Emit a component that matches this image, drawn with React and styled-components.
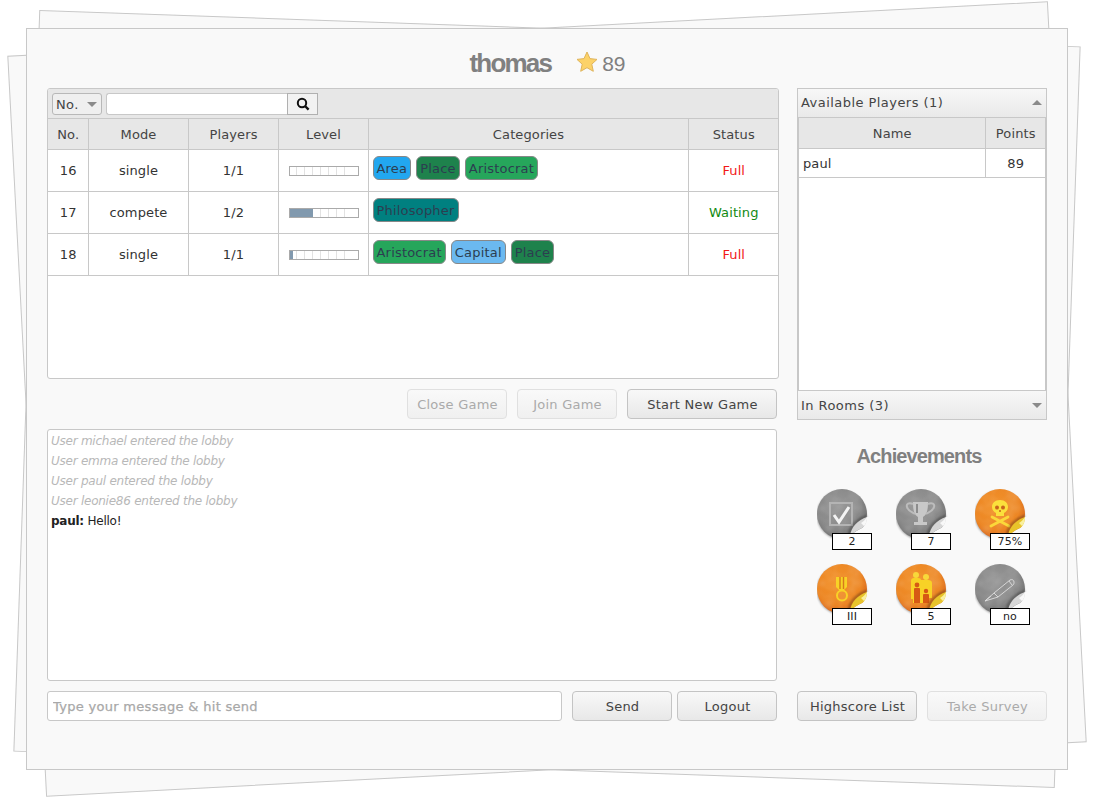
import React from "react";
import styled, { createGlobalStyle } from "styled-components";

const games = [
    { no: 16, mode: "single", players: "1/1", level: 0, tags: ["Area", "Place", "Aristocrat"], status: "Full" },
    { no: 17, mode: "compete", players: "1/2", level: 23, tags: ["Philosopher"], status: "Waiting" },
    { no: 18, mode: "single", players: "1/1", level: 3, tags: ["Aristocrat", "Capital", "Place"], status: "Full" },
];

const tagColors = {
    Area: "#22a7f0",
    Place: "#1e824c",
    Aristocrat: "#26a65b",
    Philosopher: "#008080",
    Capital: "#6bb9f0",
};

const lobby = ["michael", "emma", "paul", "leonie86"];

const achievements = [
    { id: "check", tone: "grey", label: "2" },
    { id: "trophy", tone: "grey", label: "7" },
    { id: "skull", tone: "orange", label: "75%" },
    { id: "medal", tone: "orange", label: "III" },
    { id: "family", tone: "orange", label: "5" },
    { id: "pen", tone: "grey", label: "no" },
];

const Glyph = ({ id }) => {
    if (id === "check") {
        return (
            <g fill="none">
                <rect x="13" y="14" width="22" height="22" stroke="#b4b4b4" strokeWidth="2" />
                <path d="M17 26l5 7 10-15" stroke="#f4f4f4" strokeWidth="3" />
            </g>
        );
    }
    if (id === "trophy") {
        return (
            <g>
                <path d="M17 13h15c0 8-1 13-5 15v5h4v3H18v-3h4v-5c-4-2-5-7-5-15z" fill="#c8c8c8" />
                <path
                    d="M17 15c-4-2-7 0-6 3 1 4 5 5 8 7M32 15c4-2 7 0 6 3-1 4-5 5-8 7"
                    fill="none"
                    stroke="#bcbcbc"
                    strokeWidth="2"
                />
                <path d="M21 15v9" stroke="#8c8c8c" strokeWidth="2" />
            </g>
        );
    }
    if (id === "skull") {
        return (
            <g>
                <path d="M25 11c-5 0-8 3-8 7 0 3 2 5 4 6v3h8v-3c2-1 4-3 4-6 0-4-3-7-8-7z" fill="#fbe03c" />
                <circle cx="22" cy="18.5" r="2" fill="#c9641c" />
                <circle cx="28" cy="18.5" r="2" fill="#c9641c" />
                <path d="M24 22h2" stroke="#c9641c" strokeWidth="1.4" />
                <path d="M17 28l17 9M33 28l-17 9" stroke="#fbd83a" strokeWidth="2.8" strokeLinecap="round" />
            </g>
        );
    }
    if (id === "medal") {
        return (
            <g>
                <path d="M19 13h11v10l-4 4h-3l-4-4z" fill="#f8d226" />
                <path d="M23 13v12M26.5 13v12" stroke="#d8781c" strokeWidth="1.4" />
                <circle cx="25" cy="31.5" r="5" fill="none" stroke="#f8d226" strokeWidth="2" />
            </g>
        );
    }
    if (id === "family") {
        return (
            <g>
                <circle cx="20" cy="11" r="3" fill="#f8d83a" />
                <circle cx="30" cy="13" r="3" fill="#f8d83a" />
                <path d="M15 17q0-3 3-3h4q3 0 3 2 1 0 7 0 4 0 4 3v15h-3v5H17v-4h-2z" fill="#f8d226" />
                <circle cx="21" cy="21" r="2.4" fill="#d65a14" />
                <path d="M18 25q0-1 1-1h4q1 0 1 1v14h-6z" fill="#d65a14" />
                <circle cx="30" cy="27" r="2.2" fill="#d65a14" />
                <path d="M27 31q0-1 1-1h4q1 0 1 1v8h-6z" fill="#d65a14" />
            </g>
        );
    }
    return (
        <g fill="none" stroke="#dedede" strokeWidth="0.9">
            <path d="M19 29L35 16c2-1 4 0 4 2 0 1 0 2-1 3L23 33z" />
            <path d="M19 29l-9 8 13-4M10 37l6-5M34 17l3 4" />
        </g>
    );
};

const Badge = ({ id, tone }) => {
    const orange = tone === "orange";
    return (
        <svg width="52" height="52" viewBox="0 0 52 52">
            <defs>
                <radialGradient id={`face-${id}`} cx="42%" cy="35%" r="72%">
                    <stop offset="0" stopColor={orange ? "#f2922a" : "#989898"} />
                    <stop offset="0.65" stopColor={orange ? "#ec8624" : "#878787"} />
                    <stop offset="1" stopColor={orange ? "#cf5a1c" : "#626262"} />
                </radialGradient>
                <filter id={`mottle-${id}`} x="0" y="0" width="100%" height="100%">
                    <feTurbulence type="fractalNoise" baseFrequency="0.09" numOctaves="2" seed="4" />
                    <feColorMatrix values="0 0 0 0 1 0 0 0 0 1 0 0 0 0 1 0.22 0 0 0 -0.07" />
                    <feComposite in2="SourceGraphic" operator="in" />
                </filter>
                <filter id={`soft-${id}`} x="-20%" y="-20%" width="140%" height="140%">
                    <feGaussianBlur stdDeviation="1" />
                </filter>
            </defs>
            <circle cx="24.5" cy="26" r="24.5" fill="#000" opacity="0.4" filter={`url(#soft-${id})`} />
            <circle cx="25" cy="25" r="25" fill={`url(#face-${id})`} />
            <circle cx="25" cy="25" r="25" fill="#fff" filter={`url(#mottle-${id})`} />
            <Glyph id={id} />
            <path
                d="M32 46C33 37 41 30 50 27"
                fill="none"
                stroke="#000"
                strokeWidth="2.5"
                opacity="0.3"
                filter={`url(#soft-${id})`}
            />
            <path d="M33 52V47C37 43 41 41 45 39 48 37 50 33 50 28H52V52z" fill="#f9f9f9" />
            <path
                d="M33 47C34 38 41 31 50 28 50 33 48 37 45 39 41 41 37 43 33 47z"
                fill={orange ? "#e8c42a" : "#d6d6d6"}
            />
            <path d="M44 34c2-1 4-3 6-6 0 4-1 7-3 9-1-1-2-2-3-3z" fill={orange ? "#f9f0a0" : "#f8f8f8"} />
        </svg>
    );
};

const Arrow = ({ up }) => <Caret $up={up} />;

const App = () => (
    <Page>
        <GlobalStyle />
        <Stage>
            <Sheet $angle={2} />
            <Sheet $angle={-3} />
            <Panel>
                <Header>
                    <Title>thomas</Title>
                    <Score>
                        <svg width="22" height="22" viewBox="0 0 22 22">
                            <path
                                d="M11 1l3 6.6 7 .8-5.2 4.8 1.5 7.1L11 16.7l-6.3 3.6 1.5-7.1L1 8.4l7-.8z"
                                fill="#fcd268"
                                stroke="#dfb45c"
                            />
                        </svg>
                        <ScoreValue>89</ScoreValue>
                    </Score>
                </Header>
                <Columns>
                    <LeftColumn>
                        <GameGrid>
                            <Toolbar>
                                <FilterSelect>
                                    No.
                                    <Arrow />
                                </FilterSelect>
                                <SearchBox />
                                <SearchButton>
                                    <svg width="14" height="14" viewBox="0 0 14 14" fill="none">
                                        <circle cx="6" cy="6" r="4.2" stroke="#111" strokeWidth="2" />
                                        <path d="M9 9l3.6 3.6" stroke="#111" strokeWidth="2.4" />
                                    </svg>
                                </SearchButton>
                            </Toolbar>
                            <GamesTable>
                                <colgroup>
                                    <col width="40" />
                                    <col width="100" />
                                    <col width="90" />
                                    <col width="90" />
                                    <col width="320" />
                                    <col width="90" />
                                </colgroup>
                                <thead>
                                    <tr>
                                        <th>No.</th>
                                        <th>Mode</th>
                                        <th>Players</th>
                                        <th>Level</th>
                                        <th>Categories</th>
                                        <th>Status</th>
                                    </tr>
                                </thead>
                                <tbody>
                                    {games.map(game => (
                                        <tr key={game.no}>
                                            <td>{game.no}</td>
                                            <td>{game.mode}</td>
                                            <td>{game.players}</td>
                                            <td>
                                                <LevelBar>
                                                    <LevelFill style={{ width: game.level }} />
                                                </LevelBar>
                                            </td>
                                            <TagCell>
                                                <TagList>
                                                    {game.tags.map(tag => (
                                                        <Tag key={tag} $color={tagColors[tag]}>
                                                            {tag}
                                                        </Tag>
                                                    ))}
                                                </TagList>
                                            </TagCell>
                                            <StatusCell $status={game.status}>{game.status}</StatusCell>
                                        </tr>
                                    ))}
                                </tbody>
                            </GamesTable>
                        </GameGrid>
                        <GameActions>
                            <Button $width={100} disabled>
                                Close Game
                            </Button>
                            <Button $width={100} disabled>
                                Join Game
                            </Button>
                            <Button $width={150}>Start New Game</Button>
                        </GameActions>
                        <ChatLog>
                            {lobby.map(name => (
                                <Notice key={name}>User {name} entered the lobby</Notice>
                            ))}
                            <Message>
                                <b>paul:</b> Hello!
                            </Message>
                        </ChatLog>
                        <ChatBar>
                            <ChatInput placeholder="Type your message & hit send" />
                            <Button $width={100}>Send</Button>
                            <LogoutButton $width={100}>Logout</LogoutButton>
                        </ChatBar>
                    </LeftColumn>
                    <RightColumn>
                        <AccordionHead $lift={2}>
                            Available Players (1)
                            <Arrow up />
                        </AccordionHead>
                        <PlayerPane>
                            <PlayersTable>
                                <colgroup>
                                    <col width="186" />
                                    <col width="60" />
                                </colgroup>
                                <thead>
                                    <tr>
                                        <th>Name</th>
                                        <th>Points</th>
                                    </tr>
                                </thead>
                                <tbody>
                                    <tr>
                                        <PlayerName>paul</PlayerName>
                                        <td>89</td>
                                    </tr>
                                </tbody>
                            </PlayersTable>
                        </PlayerPane>
                        <AccordionHead $lift={0}>
                            In Rooms (3)
                            <Arrow />
                        </AccordionHead>
                        <SectionTitle>Achievements</SectionTitle>
                        <AchievementGrid>
                            {achievements.map(item => (
                                <Achievement key={item.id}>
                                    <Badge id={item.id} tone={item.tone} />
                                    <AchievementLabel>{item.label}</AchievementLabel>
                                </Achievement>
                            ))}
                        </AchievementGrid>
                        <RightActions>
                            <Button $width={120}>Highscore List</Button>
                            <Button $width={120} disabled>
                                Take Survey
                            </Button>
                        </RightActions>
                    </RightColumn>
                </Columns>
            </Panel>
        </Stage>
    </Page>
);

const GlobalStyle = createGlobalStyle`
    html, body {
        margin: 0;
        background: #fff;
    }

    body {
        font-family: "DejaVu Sans", Verdana, sans-serif;
        font-size: 13px;
        letter-spacing: 0.12px;
        color: #333;
    }
`;

const Page = styled.div`
    box-sizing: border-box;
    height: 806px;
    padding: 28px 0 0 26px;
    overflow: hidden;
`;

const Stage = styled.div`
    position: relative;
    width: 1042px;
    height: 742px;
`;

const Sheet = styled.div`
    position: absolute;
    inset: 0;
    box-sizing: border-box;
    background: #f9f9f9;
    border: 1px solid #c8c8c8;
    transform: rotate(${p => p.$angle}deg);
`;

const Panel = styled.main`
    position: relative;
    box-sizing: border-box;
    width: 100%;
    height: 100%;
    padding: 0 19px 0 20px;
    background: #f9f9f9;
    border: 1px solid #c8c8c8;
    display: flex;
    flex-direction: column;
`;

const Header = styled.header`
    height: 59px;
    display: flex;
    align-items: center;
    justify-content: center;
    gap: 25px;
    padding-top: 10px;
    box-sizing: border-box;
    color: #808080;
    font-family: "Liberation Sans", Arial, sans-serif;
`;

const Title = styled.h1`
    margin: 0;
    font-size: 26px;
    font-weight: bold;
    letter-spacing: -1.8px;
`;

const Score = styled.div`
    display: flex;
    align-items: center;
    gap: 4px;

    svg {
        margin-top: -4px;
    }
`;

const ScoreValue = styled.span`
    font-size: 21px;
    letter-spacing: 0;
    padding-top: 1px;
`;

const Columns = styled.div`
    display: flex;
    gap: 18px;
`;

const LeftColumn = styled.section`
    width: 732px;
    display: flex;
    flex-direction: column;
    gap: 10px;
`;

const RightColumn = styled.aside`
    width: 250px;
    height: 633px;
    display: flex;
    flex-direction: column;
`;

const GameGrid = styled.div`
    box-sizing: border-box;
    height: 291px;
    background: #fff;
    border: 1px solid #c8c8c8;
    border-radius: 3px;
    overflow: hidden;
`;

const Toolbar = styled.div`
    box-sizing: border-box;
    height: 30px;
    padding: 4px;
    display: flex;
    background: #e7e7e7;
    border-bottom: 1px solid #c8c8c8;
`;

const FilterSelect = styled.div`
    box-sizing: border-box;
    width: 50px;
    height: 22px;
    margin-right: 4px;
    padding: 0 4px 0 3px;
    display: flex;
    align-items: center;
    justify-content: space-between;
    letter-spacing: 0.4px;
    color: #444;
    background: #efefef;
    border: 1px solid #b8b8b8;
    border-radius: 3px;
`;

const SearchBox = styled.input`
    box-sizing: border-box;
    width: 181px;
    height: 22px;
    padding: 0 4px;
    background: #fff;
    border: 1px solid #c8c8c8;
    border-right: 0;
    border-radius: 3px 0 0 3px;
    outline: none;
`;

const SearchButton = styled.button`
    box-sizing: border-box;
    width: 31px;
    height: 22px;
    padding: 0;
    display: flex;
    align-items: center;
    justify-content: center;
    background: #f2f2f2;
    border: 1px solid #b0b0b0;
`;

const Caret = styled.i`
    width: 0;
    height: 0;
    border-left: 5px solid transparent;
    border-right: 5px solid transparent;
    ${p => (p.$up ? "border-bottom: 5px solid #8a8a8a;" : "border-top: 5px solid #8a8a8a;")}
`;

const GamesTable = styled.table`
    width: 730px;
    table-layout: fixed;
    border-collapse: collapse;

    th {
        height: 30px;
        padding: 0 0 0 1px;
        font-weight: normal;
        color: #444;
        background: #e7e7e7;
        border-right: 1px solid #c8c8c8;
        border-bottom: 1px solid #c8c8c8;
    }

    td {
        height: 41px;
        padding: 0 0 0 1px;
        text-align: center;
        border-right: 1px solid #c8c8c8;
        border-bottom: 1px solid #c8c8c8;
    }

    th:last-child,
    td:last-child {
        border-right: 0;
    }
`;

const LevelBar = styled.div`
    box-sizing: border-box;
    width: 70px;
    height: 10px;
    margin: 0 auto 0 9px;
    border: 1px solid #aaa;
    background: repeating-linear-gradient(to right, #fff 0 6px, #e2e2e2 6px 7px, #fff 7px 8px) no-repeat;
    background-size: 56px 100%;
`;

const LevelFill = styled.div`
    height: 100%;
    background: #8199ae;
`;

const TagCell = styled.td`
    vertical-align: top;
`;

const TagList = styled.div`
    display: flex;
    gap: 5px;
    padding: 6px 0 0 3px;
`;

const Tag = styled.span`
    box-sizing: border-box;
    height: 24px;
    padding: 0 3px;
    line-height: 24px;
    letter-spacing: 0.2px;
    color: #2c3e50;
    background: ${p => p.$color};
    border: 1px solid #888;
    border-radius: 6px;
`;

const StatusCell = styled.td`
    color: ${p => (p.$status === "Full" ? "#f21818" : "#128a12")};
`;

const GameActions = styled.div`
    display: flex;
    justify-content: flex-end;
    gap: 10px;
    padding-right: 2px;
`;

const Button = styled.button`
    box-sizing: border-box;
    width: ${p => p.$width}px;
    height: 30px;
    padding: 0 0 0 1px;
    font: inherit;
    letter-spacing: 0.25px;
    color: #444;
    background: linear-gradient(#f8f8f8, #e8e8e8);
    border: 1px solid #c4c4c4;
    border-radius: 4px;

    &:disabled {
        color: #aaa;
        background: linear-gradient(#f9f9f9, #f0f0f0);
        border-color: #e0e0e0;
    }
`;

const LogoutButton = styled(Button)`
    margin-left: -5px;
`;

const ChatLog = styled.div`
    box-sizing: border-box;
    width: 730px;
    height: 252px;
    padding: 1px 3px;
    background: #fff;
    border: 1px solid #c8c8c8;
    border-radius: 3px;
    font-size: 12px;
    letter-spacing: -0.25px;
    line-height: 20px;
`;

const Notice = styled.div`
    font-style: italic;
    color: #b8b8b8;
`;

const Message = styled.div`
    color: #222;
`;

const ChatBar = styled.div`
    width: 730px;
    display: flex;
    gap: 10px;
`;

const ChatInput = styled.input`
    box-sizing: border-box;
    width: 515px;
    height: 30px;
    padding: 0 5px;
    font: inherit;
    background: #fff;
    border: 1px solid #c8c8c8;
    border-radius: 3px;
    outline: none;

    &::placeholder {
        color: #a8a8a8;
        opacity: 1;
        letter-spacing: 0.3px;
        -webkit-text-stroke: 0.25px #a8a8a8;
    }
`;

const AccordionHead = styled.div`
    box-sizing: border-box;
    height: 30px;
    padding: 0 4px ${p => p.$lift}px 3px;
    display: flex;
    align-items: center;
    justify-content: space-between;
    letter-spacing: 0.45px;
    color: #444;
    background: linear-gradient(#f7f7f7, #e9e9e9);
    border: 1px solid #c8c8c8;
`;

const PlayerPane = styled.div`
    box-sizing: border-box;
    height: 272px;
    background: #fff;
    border: 2px solid #c8c8c8;
    border-top: 0;
    border-bottom: 0;
`;

const PlayersTable = styled.table`
    width: 246px;
    table-layout: fixed;
    border-collapse: collapse;

    th {
        height: 30px;
        padding: 0 0 0 1px;
        font-weight: normal;
        color: #444;
        background: #e7e7e7;
        border-right: 1px solid #c8c8c8;
        border-bottom: 1px solid #c8c8c8;
    }

    td {
        height: 28px;
        padding: 0 0 0 1px;
        text-align: center;
        border-right: 1px solid #c8c8c8;
        border-bottom: 1px solid #c8c8c8;
    }

    th:last-child,
    td:last-child {
        border-right: 0;
    }
`;

const PlayerName = styled.td`
    && {
        padding-left: 4px;
        text-align: left;
    }
`;

const SectionTitle = styled.h2`
    margin: 24px 0 20px;
    font-family: "Liberation Sans", Arial, sans-serif;
    font-size: 20px;
    line-height: 25px;
    font-weight: bold;
    letter-spacing: -0.9px;
    text-align: center;
    color: #808080;
    padding-right: 6px;
`;

const AchievementGrid = styled.div`
    display: grid;
    grid-template-columns: repeat(3, 79px);
    grid-auto-rows: 75px;
    padding-left: 20px;
`;

const Achievement = styled.div`
    position: relative;
`;

const AchievementLabel = styled.div`
    position: absolute;
    left: 15px;
    top: 44px;
    box-sizing: border-box;
    width: 40px;
    height: 17px;
    font-size: 11px;
    line-height: 15px;
    text-align: center;
    color: #222;
    background: #fff;
    border: 1px solid #000;
`;

const RightActions = styled.div`
    margin-top: auto;
    display: flex;
    gap: 10px;
`;

export default App;
